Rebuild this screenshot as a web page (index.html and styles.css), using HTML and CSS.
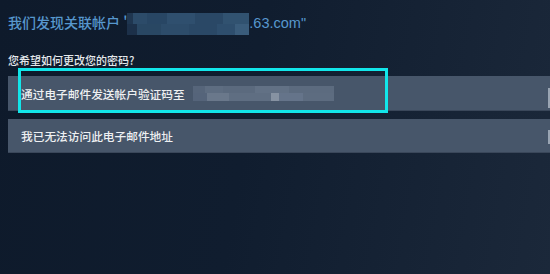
FILE: index.html
```html
<!DOCTYPE html>
<html lang="zh-CN">
<head>
<meta charset="utf-8">
<title>更改密码</title>
<link rel="stylesheet" href="styles.css">
</head>
<body>
<div class="page">
  <div class="title">
    <span class="title-text">我们发现关联帐户 '</span><span class="redact redact-title"></span><span class="title-tail">.63.com"</span>
  </div>
  <div class="question">您希望如何更改您的密码?</div>
  <div class="options">
    <div class="option option-first">
      <span class="option-text">通过电子邮件发送帐户验证码至</span>
      <span class="redact redact-email"></span>
      <span class="edge-mark"></span>
    </div>
    <div class="option option-second">
      <span class="option-text">我已无法访问此电子邮件地址</span>
      <span class="edge-mark edge-mark-low"></span>
    </div>
  </div>
  <div class="highlight"></div>
</div>
</body>
</html>
```

FILE: styles.css
```css
html, body {
  margin: 0;
  padding: 0;
  width: 550px;
  height: 274px;
  overflow: hidden;
}

body {
  background: linear-gradient(100deg, #0e1a2b 0%, #101d2f 45%, #1b283a 100%);
  font-family: "Noto Sans CJK SC", "Liberation Sans", sans-serif;
  color: #e3e7eb;
}

.page {
  position: relative;
  padding: 12px 0 0 8px;
  height: 262px;
  box-sizing: content-box;
}

.title {
  display: flex;
  align-items: flex-start;
  height: 20px;
  line-height: 20px;
  font-size: 14px;
  font-weight: 500;
  color: #5797cd;
  white-space: nowrap;
}

.title-tail {
  font-family: "Liberation Sans", sans-serif;
  font-weight: 400;
  font-size: 14.5px;
  padding-top: 1px;
}

.redact-title {
  width: 122px;
  height: 22px;
  margin-top: 1px;
  background:
    linear-gradient(90deg,
      #1f3650 0, #1f3650 6px,
      #2c4b69 6px, #2c4b69 20px,
      #284664 20px, #284664 40px,
      #2f4f6e 40px, #2f4f6e 68px,
      #2a4866 68px, #2a4866 96px,
      #315270 96px, #315270 122px) top / 122px 11px no-repeat,
    linear-gradient(90deg,
      #1c3049 0, #1c3049 10px,
      #294763 10px, #294763 34px,
      #2d4c6a 34px, #2d4c6a 62px,
      #2a4866 62px, #2a4866 90px,
      #2e4e6d 90px, #2e4e6d 108px,
      #3a5c7b 108px, #3a5c7b 122px) bottom / 122px 11px no-repeat;
}

.question {
  margin-top: 20px;
  height: 16px;
  line-height: 16px;
  font-size: 11px;
  font-weight: 500;
  color: #e4e8eb;
}

.options {
  margin-top: 8px;
  display: flex;
  flex-direction: column;
  gap: 8px;
}

.option {
  display: flex;
  align-items: center;
  background: #47566a;
  border-bottom: 1px solid #3a475a;
  box-sizing: border-box;
  padding-left: 13px;
  font-size: 11.7px;
  font-weight: 500;
  color: #eef0f2;
}

.option-first {
  height: 35px;
}

.option-second {
  height: 34px;
}

.option-text {
  white-space: nowrap;
}

.redact-email {
  margin-left: 8px;
  width: 141px;
  height: 15px;
  background:
    linear-gradient(90deg,
      #56657a 0, #56657a 12px,
      #5e6d81 12px, #5e6d81 30px,
      #5b6a7e 30px, #5b6a7e 62px,
      #627185 62px, #627185 96px,
      #5c6b7f 96px, #5c6b7f 141px) top / 141px 7px no-repeat,
    linear-gradient(90deg,
      #55647a 0, #55647a 14px,
      #6a788b 14px, #6a788b 36px,
      #5f6e82 36px, #5f6e82 78px,
      #8692a2 78px, #8692a2 86px,
      #65748a 86px, #65748a 110px,
      #5d6c80 110px, #5d6c80 141px) bottom / 141px 8px no-repeat;
}

.edge-mark {
  margin-left: auto;
  width: 2px;
  height: 20px;
  background: #9aa5b3;
  align-self: flex-start;
  margin-top: 12px;
}

.edge-mark-low {
  margin-top: 11px;
  height: 14px;
}

.highlight {
  position: absolute;
  left: 18px;
  top: 68px;
  width: 370px;
  height: 45px;
  box-sizing: border-box;
  border: 3px solid #12e6ea;
}
```
